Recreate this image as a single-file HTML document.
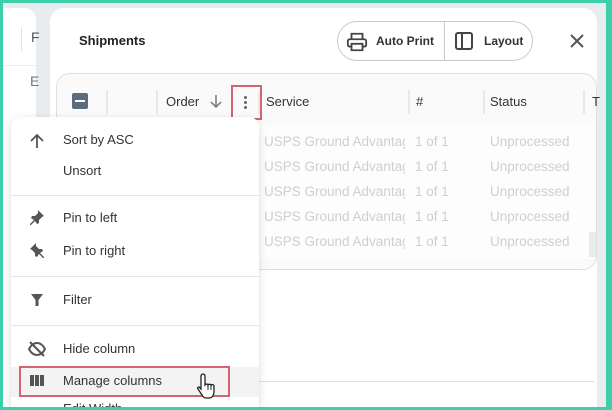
<!DOCTYPE html>
<html><head><style>
*{box-sizing:border-box;margin:0;padding:0}
body{width:612px;height:410px;overflow:hidden;background:#3ccfab;font-family:"Liberation Sans",Arial,sans-serif;position:relative}
.in{position:absolute;left:3px;top:3px;width:603px;height:404px;background:#e9ecef;overflow:hidden}
.abs{position:absolute}
.t{position:absolute;white-space:nowrap}
.r{display:flex}
.r span:nth-child(1){width:141px;overflow:hidden;white-space:nowrap;margin-right:10px}
.r span:nth-child(2){width:75px}
</style></head><body>
<div class="in">
 <div class="abs" style="left:0;top:5px;width:33px;height:400px;background:#fff;border-radius:0 12px 0 0"></div>
 <div class="abs" style="left:18px;top:24px;width:1px;height:24px;background:#e3e3e3"></div>
 <div class="t" style="left:28px;top:26px;font-size:14px;color:#555">F</div>
 <div class="abs" style="left:0;top:62px;width:33px;height:1px;background:#eee"></div>
 <div class="t" style="left:27px;top:70px;font-size:14px;color:#777">E</div>
 <div class="abs" style="left:47px;top:5px;width:547px;height:410px;background:#fff;border-radius:14px 14px 0 0"></div>
 <div class="t" style="left:76px;top:30px;font-size:13px;font-weight:bold;color:#222">Shipments</div>
 <div class="abs" style="left:334px;top:18px;width:196px;height:40px;border:1px solid #c7cbcf;border-radius:20px"></div>
 <div class="abs" style="left:441px;top:18px;width:1px;height:40px;background:#c7cbcf"></div>
 <svg class="abs" style="left:343px;top:28px" width="22" height="22" viewBox="0 0 24 24" fill="none" stroke="#444" stroke-width="2"><path d="M6 9V3h12v6M6 17H4a2 2 0 0 1-2-2v-4a2 2 0 0 1 2-2h16a2 2 0 0 1 2 2v4a2 2 0 0 1-2 2h-2M6 14h12v7H6z"/></svg>
 <div class="t" style="left:373px;top:31px;font-size:12px;font-weight:bold;color:#333">Auto Print</div>
 <svg class="abs" style="left:451px;top:28px" width="20" height="20" viewBox="0 0 20 20" fill="none" stroke="#444" stroke-width="2"><rect x="2" y="2" width="16" height="16" rx="2"/><path d="M8 2v16"/></svg>
 <div class="t" style="left:481px;top:31px;font-size:12px;font-weight:bold;color:#333">Layout</div>
 <svg class="abs" style="left:566px;top:30px" width="16" height="16" viewBox="0 0 16 16" stroke="#555" stroke-width="2"><path d="M2 2l12 12M14 2L2 14"/></svg>
 <div class="abs" style="left:53px;top:70px;width:541px;height:197px;border:1px solid #dde0e3;border-radius:14px;background:#fafafa;overflow:hidden">
  <div class="abs" style="left:0;top:52px;width:540px;height:133px;background:#fdfdfd"></div>
 </div>
 <div class="abs" style="left:69px;top:90px;width:16px;height:16px;background:#5a6c80;border-radius:2px"></div>
 <div class="abs" style="left:72px;top:97px;width:10px;height:2px;background:#fff"></div>
 <div class="abs" style="left:103px;top:87px;width:2px;height:24px;background:#e8e8e8"></div>
 <div class="abs" style="left:153px;top:87px;width:2px;height:24px;background:#e8e8e8"></div>
 <div class="t" style="left:163px;top:91px;font-size:13px;color:#333">Order</div>
 <svg class="abs" style="left:206px;top:91px" width="14" height="14" viewBox="0 0 14 14" stroke="#777" stroke-width="1.5" fill="none"><path d="M7 1v12M2 8l5 5 5-5"/></svg>
 <div class="abs" style="left:228px;top:82px;width:31px;height:35px;border:2px solid #d4646f"></div>
 <div class="abs" style="left:241px;top:93px;width:3px;height:3px;background:#666;border-radius:2px;box-shadow:0 5px 0 #666,0 10px 0 #666"></div>
 <div class="abs" style="left:255px;top:89px;width:2px;height:22px;background:#e8e8e8"></div>
 <div class="t" style="left:263px;top:91px;font-size:13px;color:#333">Service</div>
 <div class="abs" style="left:405px;top:87px;width:2px;height:24px;background:#e8e8e8"></div>
 <div class="t" style="left:413px;top:91px;font-size:13px;color:#333">#</div>
 <div class="abs" style="left:480px;top:87px;width:2px;height:24px;background:#e8e8e8"></div>
 <div class="t" style="left:487px;top:91px;font-size:13px;color:#333">Status</div>
 <div class="abs" style="left:580px;top:87px;width:2px;height:24px;background:#e8e8e8"></div>
 <div class="t" style="left:589px;top:91px;font-size:13px;color:#333">T</div>
 <div style="position:absolute;left:261px;top:126px;font-size:13.5px;color:#cfcfcf;line-height:25px">
  <div class="r"><span>USPS Ground Advantage</span><span>1 of 1</span><span>Unprocessed</span></div>
  <div class="r"><span>USPS Ground Advantage</span><span>1 of 1</span><span>Unprocessed</span></div>
  <div class="r"><span>USPS Ground Advantage</span><span>1 of 1</span><span>Unprocessed</span></div>
  <div class="r"><span>USPS Ground Advantage</span><span>1 of 1</span><span>Unprocessed</span></div>
  <div class="r"><span>USPS Ground Advantage</span><span>1 of 1</span><span>Unprocessed</span></div>
 </div>
 <div class="abs" style="left:586px;top:229px;width:7px;height:25px;background:#e8ebeb"></div>
 <div class="abs" style="left:255px;top:378px;width:336px;height:1px;background:#dde0e3"></div>
 <!-- menu -->
 <div class="abs" style="left:8px;top:114px;width:248px;height:300px;background:#fff;border-radius:10px;box-shadow:0 2px 8px rgba(0,0,0,.15)"></div>
 <svg class="abs" style="left:26px;top:130px" width="16" height="16" viewBox="0 0 16 16" stroke="#555" stroke-width="1.8" fill="none"><path d="M8 15V2M2 8l6-6 6 6"/></svg>
 <div class="t" style="left:60px;top:129px;font-size:13px;color:#333">Sort by ASC</div>
 <div class="t" style="left:60px;top:160px;font-size:13px;color:#333">Unsort</div>
 <div class="abs" style="left:8px;top:192px;width:248px;height:1px;background:#e6e6e6"></div>
 <svg class="abs" style="left:26px;top:206px" width="16" height="16" viewBox="0 0 16 16" fill="#555"><path d="M9 1l6 6-2 1-3 3 0 3-2 1-2-3-4 4-1 0 0-1 4-4-3-2 1-2 3 0 3-3z"/></svg>
 <div class="t" style="left:60px;top:207px;font-size:13px;color:#333">Pin to left</div>
 <svg class="abs" style="left:26px;top:239px" width="16" height="16" viewBox="0 0 16 16" fill="#555"><path d="M7 1l-6 6 2 1 3 3 0 3 2 1 2-3 4 4 1 0 0-1-4-4 3-2-1-2-3 0-3-3z"/></svg>
 <div class="t" style="left:60px;top:240px;font-size:13px;color:#333">Pin to right</div>
 <div class="abs" style="left:8px;top:273px;width:248px;height:1px;background:#e6e6e6"></div>
 <svg class="abs" style="left:27px;top:290px" width="14" height="14" viewBox="0 0 14 14" fill="#555"><path d="M1 1h12L8.5 7v6h-3V7z"/></svg>
 <div class="t" style="left:60px;top:289px;font-size:13px;color:#333">Filter</div>
 <div class="abs" style="left:8px;top:322px;width:248px;height:1px;background:#e6e6e6"></div>
 <svg class="abs" style="left:25px;top:338px" width="18" height="16" viewBox="0 0 18 16" fill="none" stroke="#555" stroke-width="2"><path d="M1 8c2-4 5-6 8-6s6 2 8 6c-2 4-5 6-8 6S3 12 1 8z"/><path d="M2 1l14 14" stroke="#555"/></svg>
 <div class="t" style="left:60px;top:338px;font-size:13px;color:#333">Hide column</div>
 <div class="abs" style="left:8px;top:364px;width:248px;height:30px;background:#f3f3f3"></div>
 <div class="abs" style="left:16px;top:363px;width:211px;height:31px;border:2px solid #d4646f"></div>
 <div class="abs" style="left:27px;top:372px;width:4px;height:11px;background:#555;box-shadow:5px 0 0 #555,10px 0 0 #555"></div>
 <div class="t" style="left:60px;top:370px;font-size:13px;color:#333">Manage columns</div>
 <div class="t" style="left:60px;top:398px;font-size:13px;color:#333">Edit Width</div>
 <svg class="abs" style="left:193px;top:369px" width="24" height="28" viewBox="0 0 24 28"><path d="M7 2c1 0 2 1 2 2v9l1-1c1 0 2 0 2 1 1-1 2-1 3 0 1-1 3 0 3 1v6c0 3-2 6-5 6h-3c-2 0-3-1-4-3l-4-6c-1-1 0-2 1-2l2 2V4c0-1 1-2 2-2z" fill="#fff" stroke="#222" stroke-width="1.3"/><path d="M12 13v5M15 13v5" stroke="#222" stroke-width="1"/></svg>
</div>
</body></html>
